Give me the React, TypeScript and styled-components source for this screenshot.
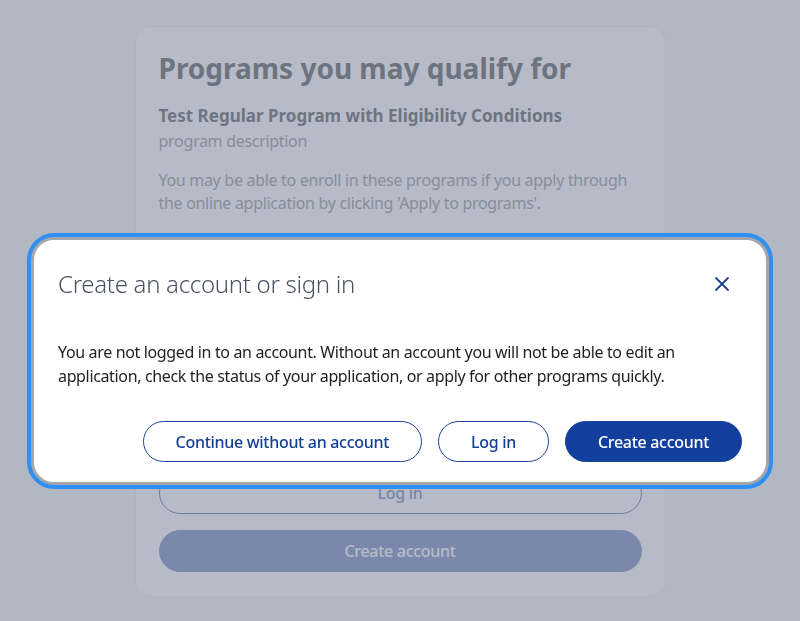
import React from "react";
import styled, { createGlobalStyle } from "styled-components";

const GlobalStyle = createGlobalStyle`
    html, body {
        margin: 0;
        padding: 0;
        background: #f7f8f9;
        font-family: "Noto Sans", "Open Sans", Arial, sans-serif;
    }
    * {
        box-sizing: border-box;
    }
`;

export default function App() {
    return (
        <>
            <GlobalStyle />
            <Page>
                <Card>
                    <Heading>Programs you may qualify for</Heading>
                    <Program>
                        <ProgramName>Test Regular Program with Eligibility Conditions</ProgramName>
                        <ProgramDescription>program description</ProgramDescription>
                    </Program>
                    <Note>
                        You may be able to enroll in these programs if you apply through the online
                        application by clicking 'Apply to programs'.
                    </Note>
                    <SectionTitle>Apply online</SectionTitle>
                    <Note>
                        Applying online lets you save your progress and come back later to finish.
                    </Note>
                    <Actions>
                        <CardButton $filled>Apply to programs</CardButton>
                        <CardButton>Continue without an account</CardButton>
                        <CardButton>Log in</CardButton>
                        <CardButton $filled>Create account</CardButton>
                    </Actions>
                </Card>
            </Page>
            <Overlay>
                <Dialog role="dialog" aria-modal="true">
                    <DialogHeader>
                        <DialogTitle>Create an account or sign in</DialogTitle>
                        <CloseButton aria-label="Close">
                            <svg width="16" height="16" viewBox="0 0 16 16" fill="none">
                                <path d="M2 2L14 14M14 2L2 14" stroke="currentColor" strokeWidth="1.8" strokeLinecap="round" />
                            </svg>
                        </CloseButton>
                    </DialogHeader>
                    <DialogBody>
                        You are not logged in to an account. Without an account you will not be able to edit an
                        application, check the status of your application, or apply for other programs quickly.
                    </DialogBody>
                    <DialogFooter>
                        <DialogButton>Continue without an account</DialogButton>
                        <DialogButton>Log in</DialogButton>
                        <DialogButton $primary>Create account</DialogButton>
                    </DialogFooter>
                </Dialog>
            </Overlay>
        </>
    );
}

const Page = styled.main`
    min-height: 100vh;
    display: flex;
    justify-content: center;
    padding-top: 26px;
`;

const Card = styled.section`
    width: 531px;
    background: #ffffff;
    border: 1px solid #eef0f3;
    border-radius: 16px;
    padding: 23px 23px 24px;
    display: flex;
    flex-direction: column;
    align-self: flex-start;
`;

const Heading = styled.h1`
    margin: 0;
    font-size: 28px;
    line-height: 36px;
    font-weight: 700;
    color: #7a7b7d;
`;

const Program = styled.div`
    margin-top: 18px;
    display: flex;
    flex-direction: column;
`;

const ProgramName = styled.h2`
    margin: 0;
    font-size: 17px;
    line-height: 24px;
    font-weight: 700;
    color: #7c7d80;
`;

const ProgramDescription = styled.p`
    margin: 1px 0 0;
    font-size: 16px;
    line-height: 24px;
    letter-spacing: -0.3px;
    color: #aaabad;
`;

const Note = styled.p`
    margin: 16px 0 0;
    font-size: 16px;
    line-height: 23px;
    letter-spacing: -0.3px;
    color: #aaabad;
`;

const SectionTitle = styled.h3`
    margin: 20px 0 0;
    text-align: center;
    font-size: 17px;
    line-height: 24px;
    font-weight: 700;
    color: #7c7d80;
`;

const Actions = styled.div`
    margin-top: 35px;
    display: flex;
    flex-direction: column;
    gap: 16px;
`;

const CardButton = styled.button<{ $filled?: boolean }>`
    height: 42px;
    border-radius: 21px;
    font-family: inherit;
    font-size: 16px;
    font-weight: 500;
    letter-spacing: -0.3px;
    border: 1px solid ${(p) => (p.$filled ? "#90a3cc" : "#7d8fb9")};
    background: ${(p) => (p.$filled ? "#90a3cc" : "transparent")};
    color: ${(p) => (p.$filled ? "#ffffff" : "#8a9cc6")};
`;

const Overlay = styled.div`
    position: fixed;
    inset: 0;
    background: rgba(96, 106, 132, 0.46);
    display: flex;
    justify-content: center;
    align-items: flex-start;
    padding-top: 237px;
`;

const Dialog = styled.div`
    width: 738px;
    background: #ffffff;
    border: 3px solid #a3a6ad;
    border-radius: 23px;
    box-shadow: 0 0 0 4px #2f8ff3;
    padding: 24px 24px 20px;
    display: flex;
    flex-direction: column;
`;

const DialogHeader = styled.div`
    display: flex;
    align-items: center;
    justify-content: space-between;
`;

const DialogTitle = styled.h2`
    margin: 0;
    font-size: 24px;
    line-height: 40px;
    font-weight: 300;
    letter-spacing: -0.3px;
    color: #4b5262;
`;

const CloseButton = styled.button`
    width: 40px;
    height: 40px;
    border: none;
    background: none;
    padding: 0;
    display: flex;
    align-items: center;
    justify-content: center;
    color: #1d3f8f;
`;

const DialogBody = styled.p`
    margin: 36px 0 0;
    font-size: 16px;
    line-height: 24px;
    letter-spacing: -0.35px;
    color: #1f1f1f;
`;

const DialogFooter = styled.div`
    margin-top: 33px;
    display: flex;
    justify-content: flex-end;
    gap: 16px;
`;

const DialogButton = styled.button<{ $primary?: boolean }>`
    height: 41px;
    padding: 0 32px;
    border-radius: 21px;
    font-family: inherit;
    font-size: 16px;
    font-weight: 500;
    letter-spacing: -0.3px;
    border: 1px solid #1d4396;
    background: ${(p) => (p.$primary ? "#123f9e" : "#ffffff")};
    color: ${(p) => (p.$primary ? "#ffffff" : "#133f98")};
`;
